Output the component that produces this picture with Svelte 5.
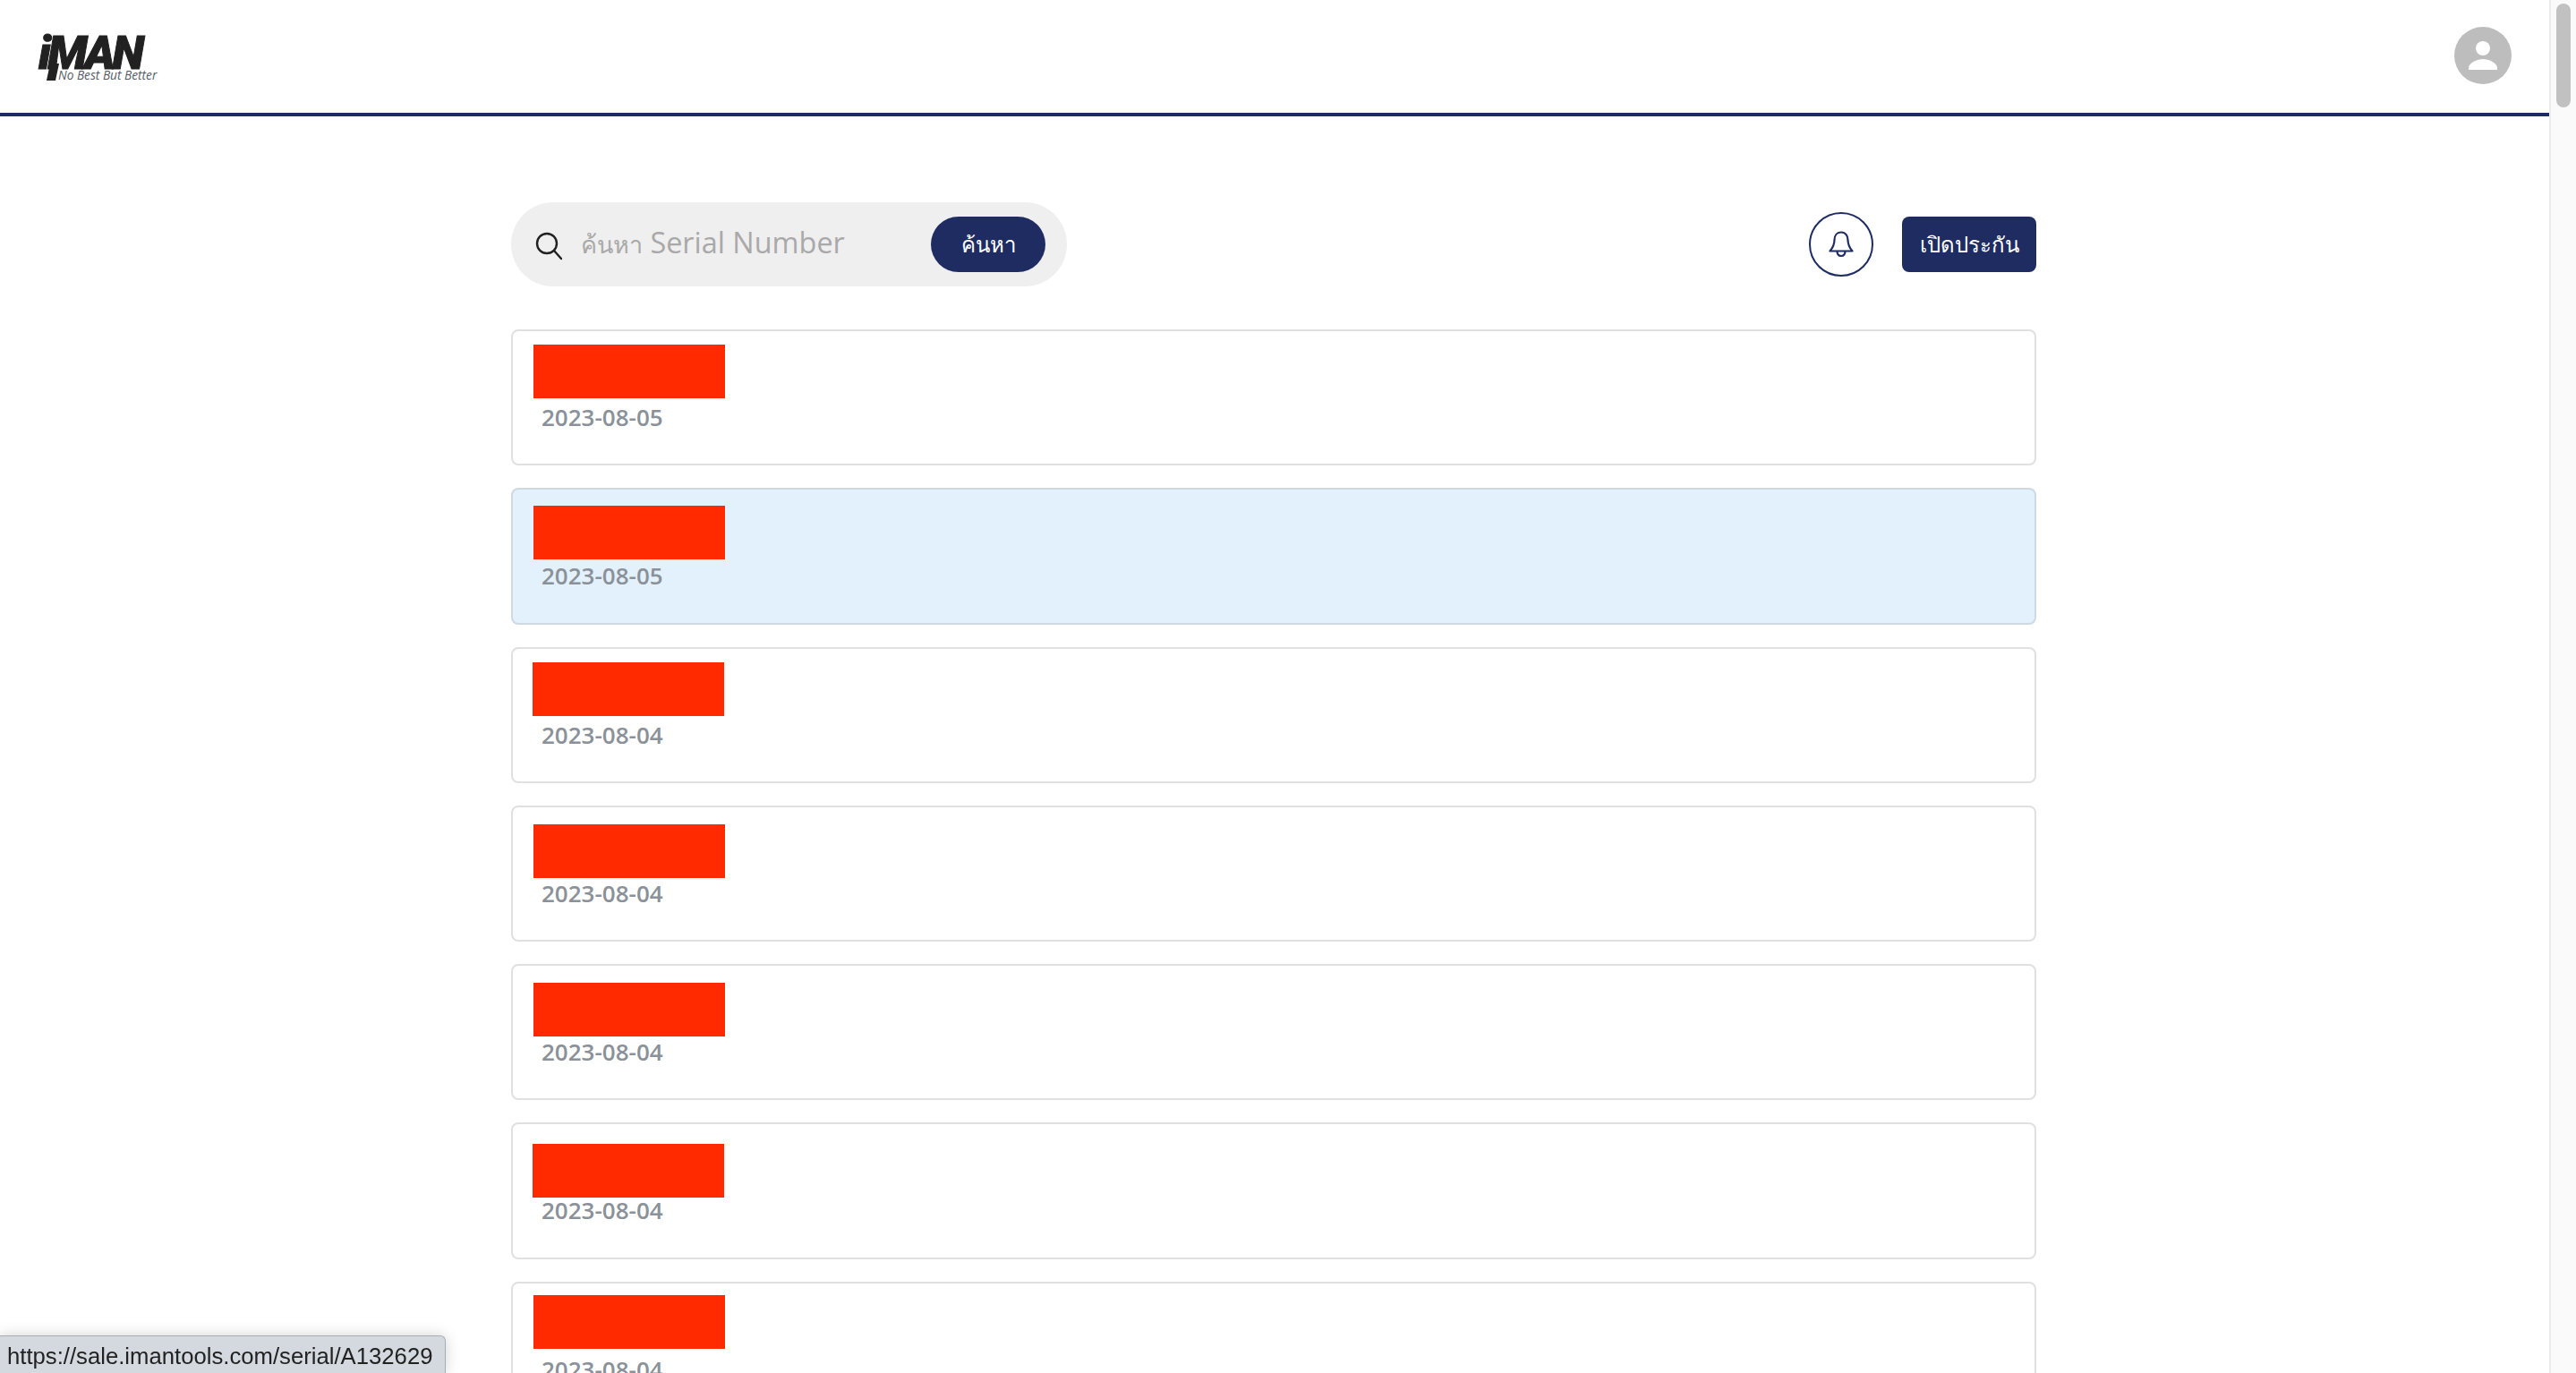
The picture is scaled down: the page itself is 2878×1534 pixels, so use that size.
<script lang="ts">
	// offsets of the red redaction bars differ per row in the source
	const rows = [
		{ date: '2023-08-05', bar: 15, left: 23, active: false },
		{ date: '2023-08-05', bar: 17.7, left: 23, active: true },
		{ date: '2023-08-04', bar: 15.4, left: 22, active: false },
		{ date: '2023-08-04', bar: 19.1, left: 23, active: false },
		{ date: '2023-08-04', bar: 18.8, left: 23, active: false },
		{ date: '2023-08-04', bar: 21.5, left: 22, active: false },
		{ date: '2023-08-04', bar: 13.2, left: 23, active: false }
	];
</script>

<div class="page">
	<div class="main">
		<header>
			<div class="logo">
				<span class="mark">iMAN</span>
				<span class="leg"></span>
				<span class="tagline">No Best But Better</span>
			</div>
			<div class="avatar">
				<svg viewBox="0 0 64 64" width="64" height="64">
					<circle cx="32" cy="32" r="32" fill="#bdbdbd" />
					<circle cx="32" cy="24" r="8" fill="#fff" />
					<path d="M16 48v-2c0-6 10-10 16-10s16 4 16 10v2z" fill="#fff" />
				</svg>
			</div>
		</header>

		<div class="content">
			<div class="toolbar">
				<div class="search">
					<svg class="lens" viewBox="0 0 30 32" width="30" height="32" fill="none" stroke="#212121" stroke-width="2.4">
						<circle cx="13" cy="13" r="11" />
						<path d="M21 21l8 9" stroke-linecap="round" />
					</svg>
					<span class="placeholder"><span class="thai">ค้นหา</span> Serial Number</span>
					<button class="find">ค้นหา</button>
				</div>
				<div class="actions">
					<button class="bell" aria-label="notifications">
						<svg viewBox="0 0 28 30" width="28" height="30" fill="none" stroke="#1e2c62" stroke-width="2.2" stroke-linejoin="round">
							<path d="M14 1.5c-5 0-7.500 4-7.500 8.500 0 6-2 9-5 12.500h25c-3-3.500-5-6.500-5-12.500 0-4.500-2.500-8.500-7.500-8.500z" />
							<path d="M9.500 22.500c0 3.500 2 5.500 4.500 5.500s4.500-2 4.500-5.500" />
						</svg>
					</button>
					<button class="open">เปิดประกัน</button>
				</div>
			</div>

			<div class="list">
				{#each rows as row}
					<div class="card" class:active={row.active}>
						<span class="redact" style="top: {row.bar}px; left: {row.left}px"></span>
						<span class="date">{row.date}</span>
					</div>
				{/each}
			</div>
		</div>
	</div>

	<div class="scrollbar"><span class="thumb"></span></div>

	<div class="status">https://sale.imantools.com/serial/A132629</div>
</div>

<style>
	:global(body) {
		margin: 0;
		overflow: hidden;
		background: #fff;
	}
	.page {
		display: flex;
		height: 100vh;
		overflow: hidden;
		font-family: "Open Sans", "Noto Sans", sans-serif;
	}
	.main {
		flex: 1;
		min-width: 0;
	}
	header {
		height: 126px;
		border-bottom: 4px solid #1e2c62;
		display: flex;
		justify-content: space-between;
		align-items: center;
		padding: 0 42px 0 43px;
	}
	.logo {
		position: relative;
		width: 132px;
		height: 50px;
		margin-top: 5px;
	}
	.mark {
		display: block;
		font-family: Roboto, sans-serif;
		font-weight: 900;
		font-style: italic;
		font-size: 52px;
		line-height: 37px;
		letter-spacing: -3.500px;
		color: #212121;
		-webkit-text-stroke: 1px #212121;
	}
	.leg {
		position: absolute;
		left: 11px;
		top: 30px;
		width: 10px;
		height: 19px;
		background: #212121;
		transform: skewX(-12deg);
	}
	.tagline {
		position: absolute;
		left: 22px;
		top: 37px;
		font-size: 13.700px;
		line-height: 12px;
		font-style: italic;
		color: #555b66;
		white-space: nowrap;
	}
	.avatar {
		width: 64px;
		height: 64px;
		margin-top: -2px;
	}
	.content {
		width: 1704px;
		margin-left: 571px;
		padding-top: 96px;
	}
	.toolbar {
		display: flex;
		justify-content: space-between;
		align-items: center;
		margin-bottom: 48px;
	}
	.search {
		box-sizing: border-box;
		width: 621px;
		height: 94px;
		border-radius: 47px;
		background: #efefef;
		display: flex;
		align-items: center;
		padding: 0 24px 0 27px;
	}
	.lens {
		flex: none;
		margin-right: 21px;
		margin-top: 4px;
	}
	.placeholder {
		flex: 1;
		font-size: 32.400px;
		line-height: 40px;
		margin-top: -4px;
		color: #a9a9a9;
		white-space: nowrap;
	}
	.thai {
		font-size: 27px;
	}
	button {
		font-family: inherit;
		border: none;
		padding: 0;
		cursor: pointer;
	}
	.find {
		width: 128px;
		height: 62px;
		border-radius: 31px;
		background: #1e2c62;
		color: #fff;
		font-size: 24px;
		font-weight: 500;
	}
	.actions {
		display: flex;
		align-items: center;
		gap: 32px;
	}
	.bell {
		box-sizing: border-box;
		width: 72px;
		height: 72px;
		border-radius: 50%;
		border: 2px solid #1e2c62;
		background: #fff;
		display: flex;
		align-items: center;
		justify-content: center;
	}
	.open {
		width: 150px;
		height: 62px;
		border-radius: 8px;
		background: #1e2c62;
		color: #fff;
		font-size: 24px;
		font-weight: 500;
	}
	.list {
		display: flex;
		flex-direction: column;
		gap: 25px;
	}
	.card {
		position: relative;
		box-sizing: border-box;
		height: 152.300px;
		border: 2px solid #e0e0e0;
		border-radius: 8px;
		background: #fff;
		padding: 78px 32px 0;
		flex: none;
	}
	.card.active {
		background: #e3f1fc;
		border-color: #cfd9e2;
	}
	.redact {
		position: absolute;
		width: 214px;
		height: 60px;
		background: #ff2a00;
	}
	.date {
		display: block;
		font-size: 26px;
		line-height: 36px;
		font-weight: 600;
		color: #8a9199;
	}
	.scrollbar {
		box-sizing: border-box;
		flex: none;
		width: 30px;
		height: 100%;
		background: #fafafa;
		border-left: 2px solid #ebebeb;
		padding: 4px 6px 0 6px;
	}
	.thumb {
		display: block;
		width: 16px;
		height: 116px;
		border-radius: 8px;
		background: #c1c1c1;
	}
	.status {
		position: fixed;
		left: 0;
		bottom: 0;
		box-sizing: border-box;
		width: 498px;
		height: 42px;
		padding: 6px 0 0 8px;
		background: #d3d9df;
		border: 1px solid #a9adb2;
		border-left: none;
		border-bottom: none;
		border-radius: 0 6px 0 0;
		box-shadow: 0 0 16px rgba(0, 0, 0, 0.18);
		font-family: "Liberation Sans", sans-serif;
		font-size: 25.700px;
		line-height: 32px;
		color: #222;
		white-space: nowrap;
	}
</style>
